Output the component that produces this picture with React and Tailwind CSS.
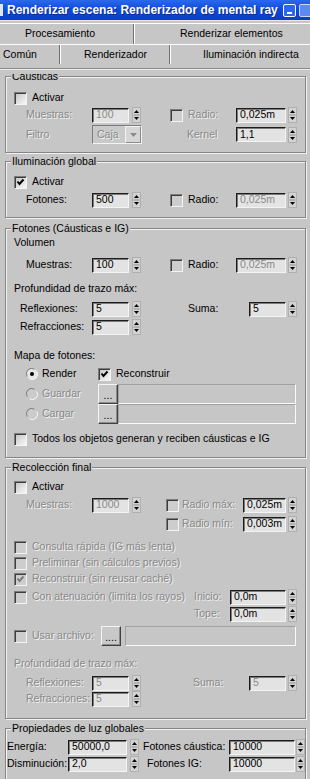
import React from "react";

const BG = "bg-[#c6c6c6]";
const DIS = "text-[#888888] [text-shadow:1px_1px_0_#f2f2f2]";

function Check({ on, off, cls = "" }) {
  return (
    <span
      className={`relative block w-[13px] h-[13px] shrink-0 border border-t-[#7c7c7c] border-l-[#7c7c7c] border-r-[#f4f4f4] border-b-[#f4f4f4] shadow-[inset_1px_1px_0_#3c3c3c] ${
        off ? "bg-[#cdcdcd]" : "bg-gradient-to-br from-[#c4c4c4] to-[#f8f8f8]"
      } ${cls}`}
    >
      {on && (
        <svg viewBox="0 0 11 11" className="absolute left-0 top-0 w-[11px] h-[11px]">
          <path d="M2.5 4.5 L4.5 7 L8.5 2.5" stroke={off ? "#7c7c7c" : "#000"} strokeWidth="2" fill="none" />
        </svg>
      )}
    </span>
  );
}

function Radio({ on, off }) {
  return (
    <svg width="12" height="12" viewBox="0 0 12 12" className="shrink-0">
      <circle cx="6" cy="6" r="5.5" fill={off ? "#cbcbcb" : "#e8e8e8"} />
      <path d="M1.2 8.5 A5.3 5.3 0 0 1 8.5 1.2" stroke="#7c7c7c" fill="none" />
      <path d="M10.8 3.5 A5.3 5.3 0 0 1 3.5 10.8" stroke="#f6f6f6" fill="none" />
      {on && <circle cx="6" cy="6" r="2" fill="#000" />}
    </svg>
  );
}

function Spin({ cls = "ml-[3px]" }) {
  return (
    <svg width="9" height="16" viewBox="0 0 9 16" className={`shrink-0 ${cls}`}>
      <rect x="0.5" y="0.5" width="8" height="15" fill="#d2d2d2" stroke="#b0b0b0" />
      <path d="M4.5 3 L7 6 L2 6 Z" fill="#000" />
      <line x1="1.5" y1="8" x2="7.5" y2="8" stroke="#8e8e8e" />
      <path d="M2 10 L7 10 L4.5 13 Z" fill="#000" />
    </svg>
  );
}

function Field({ w, v, off }) {
  return (
    <div
      className={`${w} h-[15px] shrink-0 flex items-center pl-[3px] border border-t-[#1c1c1c] border-l-[#1c1c1c] border-r-[#f4f4f4] border-b-[#f4f4f4] bg-[#e3e3e3] shadow-[inset_1px_1px_0_#7a7a7a] ${
        off ? "text-[#8a8a8a]" : "text-black"
      }`}
    >
      {v}
    </div>
  );
}

function PathBox({ w }) {
  return (
    <div className={`${w} h-[20px] shrink-0 border border-t-[#a2a2a2] border-l-[#a2a2a2] border-r-[#fafafa] border-b-[#fafafa] ${BG}`} />
  );
}

function Btn({ label }) {
  return (
    <div className="w-[20px] h-[20px] shrink-0 flex items-end justify-center pb-[3px] border border-t-[#f4f4f4] border-l-[#f4f4f4] border-r-[#404040] border-b-[#404040] shadow-[inset_-1px_-1px_0_#8c8c8c] bg-[#c8c8c8] leading-none">
      {label}
    </div>
  );
}

function Lbl({ w = "", cls = "", off, children }) {
  return <span className={`${w} ${cls} shrink-0 whitespace-nowrap ${off ? DIS : "text-black"}`}>{children}</span>;
}

function Row({ cls = "", h = "h-[16px]", children }) {
  return <div className={`flex items-center ${h} ${cls}`}>{children}</div>;
}

function Group({ title, cls = "", children }) {
  return (
    <div className={`ml-[5px] w-[301px] border border-[#858585] shadow-[inset_1px_1px_0_#f2f2f2,1px_1px_0_#f2f2f2] ${cls}`}>
      <div className={`-mt-[7px] ml-[5px] w-fit px-[1px] h-[13px] leading-[13px] whitespace-nowrap ${BG}`}>{title}</div>
      {children}
    </div>
  );
}

function CheckRow({ cls = "", on, off, text }) {
  return (
    <Row cls={cls}>
      <Check on={on} off={off} cls="ml-[8px]" />
      <Lbl cls="ml-[5px]" off={off}>
        {text}
      </Lbl>
    </Row>
  );
}

export default function App() {
  return (
    <div className={`w-[310px] h-[779px] overflow-hidden ${BG} font-['Liberation_Sans',Arial,sans-serif] text-[10.5px] text-black`}>
      {/* title bar */}
      <div className="h-[20px] flex items-center bg-gradient-to-b from-[#2a68ec] via-[#0b4ada] to-[#083fc4]">
        <span className="w-[3px] h-[12px] bg-[#dce6fb]" />
        <span className="ml-[4px] text-white font-bold text-[12px] whitespace-nowrap [text-shadow:1px_1px_0_#0a2a8a]">
          Renderizar escena: Renderizador de mental ray
        </span>
        <div className="ml-auto flex items-center gap-[3px] shrink-0 w-[27px] overflow-hidden">
          <div className="w-[13px] h-[13px] shrink-0 rounded-[2px] border border-white bg-[#2a66ee] flex items-end justify-center pb-[2px]">
            <span className="w-[5px] h-[2px] bg-white" />
          </div>
          <div className="w-[13px] h-[13px] shrink-0 rounded-[2px] border border-[#c8d6f8] bg-[#5d8af0]" />
        </div>
      </div>
      <div className="h-[3px] border-t border-[#e6e6e6]" />

      {/* tabs */}
      <div className="flex h-[21px] border-t border-white">
        <div className="w-[134px] pl-[25px] flex items-center border-r border-r-[#707070]">Procesamiento</div>
        <div className="flex-1 pl-[45px] flex items-center border-l border-l-white">Renderizar elementos</div>
      </div>
      <div className="flex h-[24px] border-t border-white pb-[4px]">
        <div className="w-[60px] pl-[3px] flex items-center border-r border-r-[#707070]">Común</div>
        <div className="w-[110px] pl-[23px] flex items-center border-l border-l-white border-r border-r-[#707070]">Renderizador</div>
        <div className="flex-1 pl-[32px] flex items-center border-l border-l-white">Iluminación indirecta</div>
      </div>
      <div className="h-[6px] border-t border-[#8a8a8a] shadow-[inset_0_1px_0_#ededed]" />

      {/* rollout viewport, scrolled so the first group's title is clipped */}
      <div className="h-[705px] overflow-hidden pt-[2px]">
        <Group title="Cáusticas" cls="pb-[8px]">
          <CheckRow cls="mt-[7px]" text="Activar" />
          <Row cls="mt-[1px]">
            <Lbl w="w-[66px]" cls="ml-[20px]" off>Muestras:</Lbl>
            <Field w="w-[37px]" v="100" off />
            <Spin />
            <Check off cls="ml-[29px]" />
            <Lbl w="w-[48px]" cls="ml-[5px]" off>Radio:</Lbl>
            <Field w="w-[50px]" v="0,025m" />
            <Spin cls="ml-[2px]" />
          </Row>
          <Row cls="mt-[2px]" h="h-[19px]">
            <Lbl w="w-[66px]" cls="ml-[20px]" off>Filtro</Lbl>
            <div className="w-[50px] h-[19px] shrink-0 flex items-center border border-t-[#7c7c7c] border-l-[#7c7c7c] border-r-[#f4f4f4] border-b-[#f4f4f4] bg-[#c9c9c9]">
              <span className={`flex-1 pl-[4px] ${DIS}`}>Caja</span>
              <div className="w-[16px] h-[17px] flex items-center justify-center bg-[#d6d6d6] border border-t-[#f4f4f4] border-l-[#f4f4f4] border-r-[#8a8a8a] border-b-[#8a8a8a]">
                <svg width="7" height="4" viewBox="0 0 7 4">
                  <path d="M0 0 L7 0 L3.5 4 Z" fill="#8a8a8a" />
                </svg>
              </div>
            </div>
            <Lbl w="w-[49px]" cls="ml-[45px]" off>Kernel</Lbl>
            <Field w="w-[50px]" v="1,1" />
            <Spin cls="ml-[2px]" />
          </Row>
        </Group>

        <Group title="Iluminación global" cls="mt-[8px] pb-[9px]">
          <CheckRow cls="mt-[6px]" on text="Activar" />
          <Row cls="mt-[2px]">
            <Lbl w="w-[66px]" cls="ml-[20px]">Fotones:</Lbl>
            <Field w="w-[37px]" v="500" />
            <Spin />
            <Check off cls="ml-[29px]" />
            <Lbl w="w-[48px]" cls="ml-[5px]">Radio:</Lbl>
            <Field w="w-[50px]" v="0,025m" off />
            <Spin cls="ml-[2px]" />
          </Row>
        </Group>

        <Group title="Fotones (Cáusticas e IG)" cls="mt-[10px] pb-[10px]">
          <Row cls="mt-[1px]" h="h-[14px]">
            <Lbl cls="ml-[8px]">Volumen</Lbl>
          </Row>
          <Row cls="mt-[7px]">
            <Lbl w="w-[66px]" cls="ml-[20px]">Muestras:</Lbl>
            <Field w="w-[37px]" v="100" />
            <Spin />
            <Check off cls="ml-[29px]" />
            <Lbl w="w-[48px]" cls="ml-[5px]">Radio:</Lbl>
            <Field w="w-[50px]" v="0,025m" off />
            <Spin cls="ml-[2px]" />
          </Row>
          <Row cls="mt-[9px]" h="h-[14px]">
            <Lbl cls="ml-[8px]">Profundidad de trazo máx:</Lbl>
          </Row>
          <Row cls="mt-[5px]">
            <Lbl w="w-[72px]" cls="ml-[14px]">Reflexiones:</Lbl>
            <Field w="w-[37px]" v="5" />
            <Spin />
            <Lbl w="w-[61px]" cls="ml-[47px]">Suma:</Lbl>
            <Field w="w-[37px]" v="5" />
            <Spin cls="ml-[2px]" />
          </Row>
          <Row cls="mt-[2px]">
            <Lbl w="w-[72px]" cls="ml-[14px]">Refracciones:</Lbl>
            <Field w="w-[37px]" v="5" />
            <Spin />
          </Row>
          <Row cls="mt-[14px]" h="h-[14px]">
            <Lbl cls="ml-[8px]">Mapa de fotones:</Lbl>
          </Row>
          <Row cls="mt-[3px]">
            <span className="ml-[20px]" />
            <Radio on />
            <Lbl w="w-[56px]" cls="ml-[4px]">Render</Lbl>
            <Check on />
            <Lbl cls="ml-[5px]">Reconstruir</Lbl>
          </Row>
          <Row cls="mt-[2px]" h="h-[20px]">
            <span className="ml-[20px]" />
            <Radio off />
            <Lbl w="w-[56px]" cls="ml-[4px]" off>Guardar</Lbl>
            <Btn label="..." />
            <PathBox w="w-[178px]" />
          </Row>
          <Row h="h-[20px]">
            <span className="ml-[20px]" />
            <Radio off />
            <Lbl w="w-[56px]" cls="ml-[4px]" off>Cargar</Lbl>
            <Btn label="..." />
            <PathBox w="w-[178px]" />
          </Row>
          <CheckRow cls="mt-[7px]" text="Todos los objetos generan y reciben cáusticas e IG" />
        </Group>

        <Group title="Recolección final" cls="mt-[9px] pb-[11px]">
          <CheckRow cls="mt-[5px]" text="Activar" />
          <Row cls="mt-[2px]">
            <Lbl w="w-[66px]" cls="ml-[20px]" off>Muestras:</Lbl>
            <Field w="w-[37px]" v="1000" off />
            <Spin />
            <Check off cls="ml-[25px]" />
            <Lbl w="w-[61px]" cls="ml-[3px]" off>Radio máx:</Lbl>
            <Field w="w-[43px]" v="0,025m" />
            <Spin cls="ml-[2px]" />
          </Row>
          <Row cls="mt-[3px]">
            <Check off cls="ml-[160px]" />
            <Lbl w="w-[61px]" cls="ml-[3px]" off>Radio mín:</Lbl>
            <Field w="w-[43px]" v="0,003m" />
            <Spin cls="ml-[2px]" />
          </Row>
          <CheckRow cls="mt-[7px]" off text="Consulta rápida (IG más lenta)" />
          <CheckRow off text="Preliminar (sin cálculos previos)" />
          <CheckRow on off text="Reconstruir (sin reusar caché)" />
          <Row cls="mt-[2px]">
            <Check off cls="ml-[8px]" />
            <Lbl w="w-[162px]" cls="ml-[5px]" off>Con atenuación (limita los rayos)</Lbl>
            <Lbl w="w-[36px]" off>Inicio:</Lbl>
            <Field w="w-[56px]" v="0,0m" />
            <Spin cls="ml-[2px]" />
          </Row>
          <Row cls="mt-[1px]">
            <Lbl w="w-[36px]" cls="ml-[188px]" off>Tope:</Lbl>
            <Field w="w-[56px]" v="0,0m" />
            <Spin cls="ml-[2px]" />
          </Row>
          <Row cls="mt-[4px]" h="h-[20px]">
            <Check off cls="ml-[8px]" />
            <Lbl w="w-[69px]" cls="ml-[5px]" off>Usar archivo:</Lbl>
            <Btn label="...." />
            <span className="ml-[4px]" />
            <PathBox w="w-[171px]" />
          </Row>
          <Row cls="mt-[11px]" h="h-[14px]">
            <Lbl cls="ml-[8px]" off>Profundidad de trazo máx:</Lbl>
          </Row>
          <Row cls="mt-[4px]">
            <Lbl w="w-[66px]" cls="ml-[20px]" off>Reflexiones:</Lbl>
            <Field w="w-[37px]" v="5" off />
            <Spin />
            <Lbl w="w-[56px]" cls="ml-[52px]" off>Suma:</Lbl>
            <Field w="w-[37px]" v="5" off />
            <Spin cls="ml-[2px]" />
          </Row>
          <Row>
            <Lbl w="w-[66px]" cls="ml-[20px]" off>Refracciones:</Lbl>
            <Field w="w-[37px]" v="5" off />
            <Spin />
          </Row>
        </Group>

        <Group title="Propiedades de luz globales" cls="mt-[9px] pb-[7px]">
          <Row cls="mt-[4px]">
            <Lbl w="w-[61px]" cls="ml-[1px]">Energía:</Lbl>
            <Field w="w-[59px]" v="50000,0" />
            <Spin />
            <Lbl w="w-[86px]" cls="ml-[4px]">Fotones cáustica:</Lbl>
            <Field w="w-[66px]" v="10000" />
            <Spin cls="ml-[1px]" />
          </Row>
          <Row cls="mt-[1px]">
            <Lbl w="w-[61px]" cls="ml-[1px]">Disminución:</Lbl>
            <Field w="w-[59px]" v="2,0" />
            <Spin />
            <Lbl w="w-[82px]" cls="ml-[8px]">Fotones IG:</Lbl>
            <Field w="w-[66px]" v="10000" />
            <Spin cls="ml-[1px]" />
          </Row>
        </Group>
      </div>
    </div>
  );
}
